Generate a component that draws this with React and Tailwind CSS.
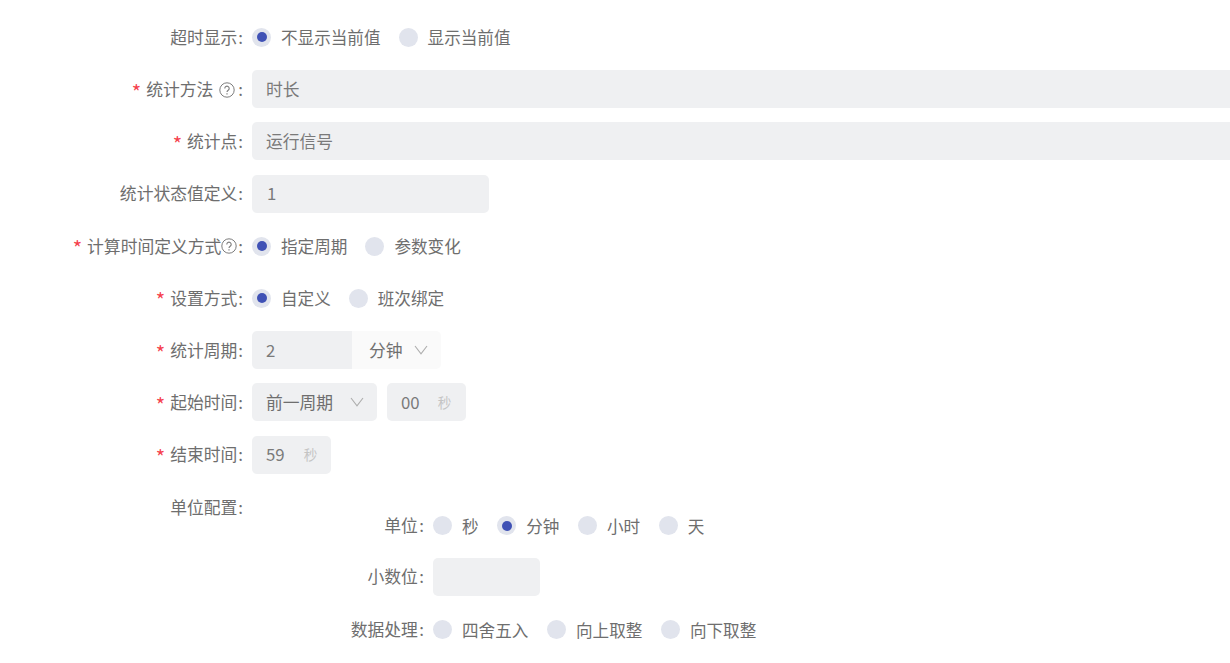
import React from "react";

const FONT = "font-['Noto_Sans_CJK_SC','Noto_Sans',sans-serif]";

function Help({ className = "" }) {
  return (
    <svg viewBox="0 0 16 16" fill="none" stroke="currentColor" className={`w-[16px] h-[16px] text-[#7d7d7d] ${className}`}>
      <circle cx="8" cy="8" r="7.2" strokeWidth="1" />
      <path d="M5.8 6.4a2.2 2.2 0 1 1 3.4 1.8c-.8.5-1.2.9-1.2 1.8" strokeWidth="1.1" />
      <path d="M8 11.2v1.2" strokeWidth="1.2" />
    </svg>
  );
}

function Chevron() {
  return (
    <svg viewBox="0 0 14 10" fill="none" stroke="#adadad" strokeWidth="1.1" className="w-[14px] h-[10px]">
      <path d="M1 1 7 8.8 13 1" />
    </svg>
  );
}

function Radio({ label, checked, gap = "mr-[18px]" }) {
  return (
    <div className={`flex items-center ${gap}`}>
      <span className="w-[19px] h-[19px] mt-[0.6px] rounded-full bg-[#e1e4ed] flex items-center justify-center">
        {checked && <span className="w-[10px] h-[10px] rounded-full bg-[#3f51b5]" />}
      </span>
      <span className="ml-[10px] pt-[0.6px] text-[16.6px]">{label}</span>
    </div>
  );
}

function Label({ text, required, help, helpClass, colonClass = "ml-[1px]" }) {
  return (
    <div className="w-[243px] h-[38px] pt-[1px] shrink-0 flex items-center justify-end whitespace-nowrap">
      {required && <span className="text-[#f5424d] text-[20px] leading-none mr-[5px] translate-y-[2px]">*</span>}
      <span>{text}</span>
      {help && <Help className={helpClass} />}
      <span className={colonClass}>:</span>
    </div>
  );
}

function Row({ children, ...label }) {
  return (
    <div className="flex items-center h-[38px] mb-[14.2px]">
      <Label {...label} />
      <div className="ml-[9px] flex-1 min-w-0 flex items-center">{children}</div>
    </div>
  );
}

function Field({ className = "", children }) {
  return (
    <div className={`h-[38px] bg-[#eff0f2] rounded-[5px] flex items-center text-[#7a7a7a] ${className}`}>
      {children}
    </div>
  );
}

function SubRow({ text, children, className = "mb-[14px]" }) {
  return (
    <div className={`flex items-center h-[38px] ${className}`}>
      <div className="w-[172px] pt-[0.6px] shrink-0 text-right whitespace-nowrap">{text}<span className="ml-[1.5px]">:</span></div>
      <div className="ml-[9px] flex items-center">{children}</div>
    </div>
  );
}

export default function App() {
  return (
    <div className={`w-[1230px] h-[663px] overflow-hidden bg-white pt-[18px] text-[16.8px] text-[#6e6e6e] ${FONT}`}>
      <Row text="超时显示">
        <Radio label="不显示当前值" checked />
        <Radio label="显示当前值" />
      </Row>
      <Row text="统计方法" required help helpClass="ml-[6px]" colonClass="ml-[3px]">
        <Field className="w-full px-[14px] rounded-r-none">时长</Field>
      </Row>
      <Row text="统计点" required>
        <Field className="w-full px-[14px] rounded-r-none">运行信号</Field>
      </Row>
      <Row text="统计状态值定义">
        <Field className="w-[237px] px-[15px]">1</Field>
      </Row>
      <Row text="计算时间定义方式" required help>
        <Radio label="指定周期" checked />
        <Radio label="参数变化" />
      </Row>
      <Row text="设置方式" required>
        <Radio label="自定义" checked />
        <Radio label="班次绑定" />
      </Row>
      <Row text="统计周期" required>
        <Field className="w-[100px] px-[14px] rounded-r-none">2</Field>
        <div className="w-[89px] h-[38px] bg-[#fafafa] rounded-r-[5px] flex items-center pl-[17px] text-[#707070]">
          <span>分钟</span>
          <span className="ml-[11px] flex"><Chevron /></span>
        </div>
      </Row>
      <Row text="起始时间" required>
        <Field className="w-[125px] pl-[14px]">
          <span className="text-[#6e6e6e]">前一周期</span>
          <span className="ml-[17px] flex"><Chevron /></span>
        </Field>
        <Field className="w-[79px] ml-[10px] pl-[14px]">
          <span>00</span>
          <span className="ml-[18px] text-[13.5px] text-[#c4c4c4]">秒</span>
        </Field>
      </Row>
      <Row text="结束时间" required>
        <Field className="w-[79px] pl-[14px]">
          <span>59</span>
          <span className="ml-[19px] text-[13.5px] text-[#c4c4c4]">秒</span>
        </Field>
      </Row>
      <div className="flex">
        <Label text="单位配置" />
        <div className="ml-[9px] pt-[19px]">
          <SubRow text="单位" className="mb-[13px]">
            <Radio label="秒" gap="mr-[18.6px]" />
            <Radio label="分钟" checked gap="mr-[18.6px]" />
            <Radio label="小时" gap="mr-[18.6px]" />
            <Radio label="天" />
          </SubRow>
          <SubRow text="小数位" className="mb-[15px]">
            <Field className="w-[107px]" />
          </SubRow>
          <SubRow text="数据处理">
            <Radio label="四舍五入" gap="mr-[18.6px]" />
            <Radio label="向上取整" gap="mr-[18.6px]" />
            <Radio label="向下取整" />
          </SubRow>
        </div>
      </div>
    </div>
  );
}
